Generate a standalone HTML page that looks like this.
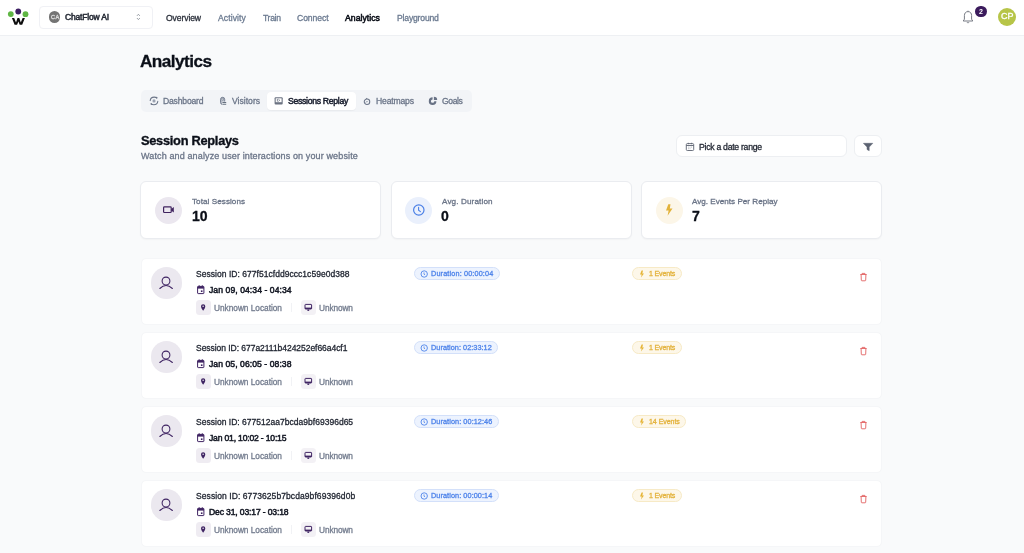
<!DOCTYPE html>
<html><head><meta charset="utf-8">
<style>
*{box-sizing:border-box;margin:0;padding:0}
html,body{width:1024px;height:553px;overflow:hidden}
body{background:#f9fafb;font-family:"Liberation Sans",sans-serif;color:#111827;position:relative}
.abs{position:absolute}
.t{position:absolute;white-space:nowrap;will-change:transform}
.hdr{position:absolute;left:0;top:0;width:1024px;height:36px;background:#fff;border-bottom:1px solid #eef0f3}
.sel{position:absolute;left:39px;top:6px;width:114px;height:22.5px;border:1px solid #f0f1f5;border-radius:4px;background:#fff}
.card{position:absolute;background:#fff;border:1px solid #eaecf0;border-radius:6px;box-shadow:0 1px 1.5px rgba(16,24,40,0.03)}
.t{-webkit-text-stroke:0.3px currentColor}
.scard{position:absolute;left:140.7px;width:741.3px;height:66.6px;background:#fff;border-radius:5px;border:1px solid #f5f6f8}
.chip{position:absolute;width:14.5px;height:14.5px;border-radius:3.5px;background:#efecf2}
.badge{position:absolute;height:12.6px;border-radius:7px}
</style></head><body>
<div class="hdr"></div>
<svg class="abs" style="left:0;top:0" width="36" height="36" viewBox="0 0 36 36">
<circle cx="10.8" cy="14.1" r="2.9" fill="#5fb644"/>
<circle cx="18.25" cy="11.5" r="2.9" fill="#3d1f63"/>
<circle cx="25.5" cy="14.2" r="2.9" fill="#5fb644"/>
<path d="M11.9 18 L14.2 18 L16.0 22.4 L17.5 18 L19.3 18 L20.8 22.4 L22.6 18 L24.9 18 L22.2 24.7 L19.7 24.7 L18.4 21.4 L17.1 24.7 L14.6 24.7 Z" fill="#0d0d0d"/>
</svg>
<div class="sel"></div>
<div class="abs" style="left:48.8px;top:11.1px;width:11.5px;height:11.5px;border-radius:50%;background:#747474"></div>
<div class="t" style="left:50.60px;top:14.86px;font-size:5.6px;line-height:5.6px;font-weight:400;color:#dcdcdc;letter-spacing:0.420px;-webkit-text-stroke:0.35px #dcdcdc;">CA</div>
<div class="t" style="left:64.60px;top:13.30px;font-size:8.5px;line-height:8.5px;font-weight:400;color:#262b36;letter-spacing:-0.163px;-webkit-text-stroke:0.5px #262b36;">ChatFlow AI</div>
<svg class="abs" style="left:135px;top:12px" width="7" height="11" viewBox="0 0 7 11"><path d="M2.0 3.8 L3.4 2.3 L4.8 3.8 M2.0 6.1 L3.4 7.6 L4.8 6.1" fill="none" stroke="#8e939c" stroke-width="0.95"/></svg>
<div class="t" style="left:166.20px;top:14.22px;font-size:8.6px;line-height:8.6px;font-weight:400;color:#2a2f3a;letter-spacing:-0.106px;">Overview</div>
<div class="t" style="left:217.80px;top:14.22px;font-size:8.6px;line-height:8.6px;font-weight:400;color:#6b7a90;letter-spacing:0.095px;">Activity</div>
<div class="t" style="left:262.60px;top:14.22px;font-size:8.6px;line-height:8.6px;font-weight:400;color:#6b7a90;letter-spacing:-0.319px;">Train</div>
<div class="t" style="left:296.90px;top:14.22px;font-size:8.6px;line-height:8.6px;font-weight:400;color:#6b7a90;letter-spacing:-0.072px;">Connect</div>
<div class="t" style="left:345.20px;top:14.14px;font-size:8.7px;line-height:8.7px;font-weight:400;color:#0b0f18;letter-spacing:0.011px;-webkit-text-stroke:0.55px #0b0f18;">Analytics</div>
<div class="t" style="left:396.80px;top:14.22px;font-size:8.6px;line-height:8.6px;font-weight:400;color:#6b7a90;letter-spacing:-0.179px;">Playground</div>
<svg class="abs" style="left:960px;top:9px" width="16" height="16" viewBox="0 0 16 16"><path d="M8 2.6 C5.6 2.6 4.4 4.4 4.4 6.6 L4.4 10.2 L3.2 12 L12.8 12 L11.6 10.2 L11.6 6.6 C11.6 4.4 10.4 2.6 8 2.6 Z M6.9 13.2 C7.3 14 8.7 14 9.1 13.2 M8 2.6 L8 1.7" fill="none" stroke="#777b84" stroke-width="1" stroke-linejoin="round"/></svg>
<div class="abs" style="left:975.3px;top:5.9px;width:11.3px;height:11.3px;border-radius:50%;background:#3b1b5c"></div>
<div class="t" style="left:978.60px;top:8.47px;font-size:7px;line-height:7px;font-weight:700;color:#fff;letter-spacing:0.000px;-webkit-text-stroke:0;">2</div>
<div class="abs" style="left:998px;top:8px;width:18px;height:18px;border-radius:50%;background:#b7c548"></div>
<div class="t" style="left:1000.70px;top:12.28px;font-size:9px;line-height:9px;font-weight:400;color:#fff;letter-spacing:-0.103px;">CP</div>
<div class="t" style="left:140.40px;top:52.84px;font-size:17.2px;line-height:17.2px;font-weight:700;color:#0b0f18;letter-spacing:-0.560px;-webkit-text-stroke:0.3px #0b0f18;">Analytics</div>
<div class="abs" style="left:140.5px;top:90px;width:331.5px;height:22px;background:#f2f4f7;border-radius:5px"></div>
<div class="abs" style="left:267.4px;top:92px;width:88.2px;height:18px;background:#fff;border-radius:4px;box-shadow:0 0.5px 1px rgba(0,0,0,0.04)"></div>
<div class="t" style="left:163.20px;top:97.42px;font-size:8.6px;line-height:8.6px;font-weight:400;color:#6b7588;letter-spacing:-0.184px;">Dashboard</div>
<div class="t" style="left:231.80px;top:97.42px;font-size:8.6px;line-height:8.6px;font-weight:400;color:#6b7588;letter-spacing:0.009px;">Visitors</div>
<div class="t" style="left:287.60px;top:97.34px;font-size:8.7px;line-height:8.7px;font-weight:400;color:#1b2030;letter-spacing:-0.314px;-webkit-text-stroke:0.5px #1b2030;">Sessions Replay</div>
<div class="t" style="left:376.00px;top:97.42px;font-size:8.6px;line-height:8.6px;font-weight:400;color:#6b7588;letter-spacing:-0.171px;">Heatmaps</div>
<div class="t" style="left:441.70px;top:97.42px;font-size:8.6px;line-height:8.6px;font-weight:400;color:#6b7588;letter-spacing:-0.417px;">Goals</div>
<svg class="abs" style="left:148px;top:95px" width="12" height="12" viewBox="0 0 12 12">
<path d="M2.2 5.6 C2.4 3.4 4.2 2.1 6.2 2.1 C7.2 2.1 8.1 2.4 8.8 2.9" fill="none" stroke="#6b7588" stroke-width="1.05" stroke-linecap="round"/>
<path d="M8.1 2.2 L9.1 2.6 L8.6 3.6" fill="none" stroke="#6b7588" stroke-width="1" stroke-linejoin="round"/>
<path d="M9.8 6.2 C9.6 8.4 7.8 9.7 5.8 9.7 C4.8 9.7 3.9 9.4 3.2 8.9" fill="none" stroke="#6b7588" stroke-width="1.05" stroke-linecap="round"/>
<path d="M3.9 9.6 L2.9 9.2 L3.4 8.2" fill="none" stroke="#6b7588" stroke-width="1" stroke-linejoin="round"/>
<circle cx="6" cy="5.9" r="1.55" fill="#9aa2b1"/>
</svg>
<svg class="abs" style="left:218px;top:95px" width="12" height="12" viewBox="0 0 12 12">
<rect x="2.5" y="2.3" width="4.2" height="7.2" rx="2.1" fill="#b4bac5" stroke="#6b7588" stroke-width="0.85"/>
<circle cx="4.7" cy="4.1" r="0.95" fill="#f2f4f7" stroke="#6b7588" stroke-width="0.6"/>
<rect x="4.1" y="6.6" width="4.3" height="3.6" fill="#f2f4f7"/>
<path d="M4.4 7.4 L8.2 7.4 M4.4 9.3 L8.2 9.3" stroke="#66707f" stroke-width="1.05"/>
</svg>
<svg class="abs" style="left:272px;top:95px" width="12" height="12" viewBox="0 0 12 12">
<rect x="2.6" y="2.2" width="8.1" height="7.4" rx="1" fill="#6c7382"/>
<rect x="3.7" y="3.3" width="5.9" height="3.9" fill="#fff"/>
<rect x="4.9" y="3.9" width="0.8" height="2.7" fill="#6c7382"/>
<path d="M6.4 4.1 L7.7 5.25 L6.4 6.4" fill="none" stroke="#6c7382" stroke-width="0.85"/>
</svg>
<svg class="abs" style="left:361px;top:95px" width="12" height="12" viewBox="0 0 12 12">
<circle cx="6" cy="6.8" r="2.75" fill="none" stroke="#6b7588" stroke-width="1.05"/>
<path d="M4.9 4.1 L5.5 2.7 L6.6 4.0 Z" fill="#6b7588"/>
<path d="M4.7 7.9 L5.6 6.3 L6.1 7.0 L7.1 6.1" fill="none" stroke="#8f98a8" stroke-width="0.7"/>
</svg>
<svg class="abs" style="left:427px;top:95px" width="12" height="12" viewBox="0 0 12 12">
<path d="M5.6 3.4 A2.75 2.75 0 1 0 8.35 6.2" fill="none" stroke="#687285" stroke-width="2.1"/>
<path d="M6.9 5.1 L6.9 1.8 A3.3 3.3 0 0 1 10.2 5.1 Z" fill="#687285"/>
</svg>
<div class="t" style="left:140.60px;top:134.66px;font-size:12.8px;line-height:12.8px;font-weight:700;color:#0b0f18;letter-spacing:-0.267px;-webkit-text-stroke:0.35px #0b0f18;">Session Replays</div>
<div class="t" style="left:140.50px;top:151.78px;font-size:9px;line-height:9px;font-weight:400;color:#6b7588;letter-spacing:0.130px;">Watch and analyze user interactions on your website</div>
<div class="card" style="left:676.3px;top:135.4px;width:170.3px;height:22px;border-color:#edeff2;box-shadow:none"></div>
<div class="card" style="left:854.4px;top:135.4px;width:27.7px;height:22px;border-color:#edeff2;box-shadow:none"></div>
<svg class="abs" style="left:684px;top:141px" width="12" height="11" viewBox="0 0 12 11">
<rect x="2.3" y="2.6" width="7.4" height="6.9" rx="1" fill="none" stroke="#5c6372" stroke-width="0.9"/>
<path d="M2.3 4.5 L9.7 4.5 M4.3 1.8 L4.3 3.2 M7.7 1.8 L7.7 3.2" stroke="#5c6372" stroke-width="0.9"/>
<path d="M4 6.1 H4.8 M5.6 6.1 H6.4 M7.2 6.1 H8 M4 7.7 H4.8 M5.6 7.7 H6.4" stroke="#9096a2" stroke-width="0.7"/>
</svg>
<svg class="abs" style="left:862px;top:142px" width="12" height="10" viewBox="0 0 12 10">
<path d="M1.4 1.3 L10.8 1.3 L7.2 5.1 L7.2 8.7 L5 7.5 L5 5.1 Z" fill="#5c6372" stroke="#5c6372" stroke-width="0.5" stroke-linejoin="round"/>
</svg>
<div class="t" style="left:699.40px;top:143.04px;font-size:8.7px;line-height:8.7px;font-weight:400;color:#1f2430;letter-spacing:-0.282px;">Pick a date range</div>
<div class="card" style="left:140.2px;top:181.2px;width:241px;height:57.5px"></div>
<div class="abs" style="left:154.5px;top:196.5px;width:27.2px;height:27.2px;border-radius:50%;background:#ebe7ef"></div>
<div class="t" style="left:191.60px;top:197.54px;font-size:8.1px;line-height:8.1px;font-weight:400;color:#697386;letter-spacing:0.067px;">Total Sessions</div>
<div class="t" style="left:191.60px;top:209.05px;font-size:14px;line-height:14px;font-weight:700;color:#0b0f18;letter-spacing:0.000px;-webkit-text-stroke:0.3px #0b0f18;">10</div>
<div class="card" style="left:391px;top:181.2px;width:241px;height:57.5px"></div>
<div class="abs" style="left:405.3px;top:196.5px;width:27.2px;height:27.2px;border-radius:50%;background:#eaf0fc"></div>
<div class="t" style="left:441.60px;top:197.54px;font-size:8.1px;line-height:8.1px;font-weight:400;color:#697386;letter-spacing:0.139px;">Avg. Duration</div>
<div class="t" style="left:441.40px;top:209.05px;font-size:14px;line-height:14px;font-weight:700;color:#0b0f18;letter-spacing:0.000px;-webkit-text-stroke:0.3px #0b0f18;">0</div>
<div class="card" style="left:641.2px;top:181.2px;width:241px;height:57.5px"></div>
<div class="abs" style="left:655.5px;top:196.5px;width:27.2px;height:27.2px;border-radius:50%;background:#fcf6e8"></div>
<div class="t" style="left:691.80px;top:197.54px;font-size:8.1px;line-height:8.1px;font-weight:400;color:#697386;letter-spacing:0.010px;">Avg. Events Per Replay</div>
<div class="t" style="left:691.60px;top:209.05px;font-size:14px;line-height:14px;font-weight:700;color:#0b0f18;letter-spacing:0.000px;-webkit-text-stroke:0.3px #0b0f18;">7</div>
<svg class="abs" style="left:161px;top:203px" width="16" height="14" viewBox="0 0 16 14">
<rect x="2.6" y="3.9" width="7.6" height="5.6" rx="0.8" fill="none" stroke="#40235f" stroke-width="1.2"/>
<path d="M10.2 6 L12.8 4 L12.8 9.6 L10.2 7.6 Z" fill="#40235f"/>
</svg>
<svg class="abs" style="left:411px;top:202px" width="16" height="16" viewBox="0 0 16 16">
<circle cx="7.8" cy="8" r="5.2" fill="none" stroke="#4a7fe6" stroke-width="1.2"/>
<path d="M7.6 5.2 L7.6 8.2 L9.4 9.6" fill="none" stroke="#4a7fe6" stroke-width="1.1" stroke-linecap="round"/>
</svg>
<svg class="abs" style="left:663px;top:202px" width="12" height="16" viewBox="0 0 12 16">
<path d="M5.3 2.2 L3 8.6 L5.6 8.6 L4.6 13.8 L9.5 6.4 L6.8 6.4 L7.5 2.2 Z" fill="#e2b23a"/>
</svg>
<div class="scard" style="top:258px"></div>
<div class="abs" style="left:150.5px;top:267px;width:31.5px;height:31.5px;border-radius:50%;background:#ebe8ef"></div>
<svg class="abs" style="left:156px;top:273px" width="20" height="20" viewBox="0 0 20 20">
<circle cx="10" cy="8" r="3.9" fill="none" stroke="#3f2463" stroke-width="1.05"/>
<path d="M3.8 15.5 Q10 9.6 16.4 15.5" fill="none" stroke="#3f2463" stroke-width="1.05" stroke-linecap="round"/>
</svg>
<div class="t" style="left:195.90px;top:269.80px;font-size:8.5px;line-height:8.5px;font-weight:400;color:#1f2430;letter-spacing:0.038px;-webkit-text-stroke:0.3px #1f2430;">Session ID: 677f51cfdd9ccc1c59e0d388</div>
<svg class="abs" style="left:195px;top:284px" width="11" height="11" viewBox="0 0 11 11">
<rect x="2.6" y="2.4" width="6.3" height="7.2" rx="0.6" fill="none" stroke="#3f2463" stroke-width="1"/>
<rect x="2.6" y="2.4" width="6.3" height="2.2" fill="#3f2463"/>
<path d="M4.2 1.2 L4.2 2.6 M7.3 1.2 L7.3 2.6" stroke="#3f2463" stroke-width="0.9"/>
<rect x="5.9" y="6.4" width="1.6" height="1.6" fill="#3f2463"/>
</svg>
<div class="t" style="left:208.60px;top:286.32px;font-size:8.6px;line-height:8.6px;font-weight:400;color:#141824;letter-spacing:0.071px;-webkit-text-stroke:0.5px #141824;">Jan 09, 04:34 - 04:34</div>
<div class="chip" style="left:196px;top:300px"></div>
<svg class="abs" style="left:196px;top:300px" width="14.5" height="14.5" viewBox="0 0 14.5 14.5">
<path d="M7.15 10.7 C6.3 9.5 5.0 8.1 5.0 6.3 A2.15 2.15 0 0 1 9.3 6.3 C9.3 8.1 8.0 9.5 7.15 10.7 Z" fill="#3f2463"/>
<circle cx="7.15" cy="6.3" r="0.75" fill="#efecf2"/>
</svg>
<div class="t" style="left:213.80px;top:304.17px;font-size:8.3px;line-height:8.3px;font-weight:400;color:#737c8e;letter-spacing:-0.019px;">Unknown Location</div>
<div class="abs" style="left:291px;top:302.7px;width:0.8px;height:9px;background:#f1f2f5"></div>
<div class="chip" style="left:301px;top:300px;background:#f3f1f5"></div>
<svg class="abs" style="left:301px;top:300px" width="14.5" height="14.5" viewBox="0 0 14.5 14.5">
<rect x="4" y="4.4" width="6.6" height="4.6" rx="0.6" fill="none" stroke="#3f2463" stroke-width="1"/>
<rect x="4" y="7.6" width="6.6" height="1.4" fill="#3f2463"/>
<path d="M6.4 10.2 L8.2 10.2" stroke="#3f2463" stroke-width="1.4"/>
</svg>
<div class="t" style="left:319.30px;top:304.17px;font-size:8.3px;line-height:8.3px;font-weight:400;color:#737c8e;letter-spacing:-0.101px;">Unknown</div>
<div class="badge" style="left:413.9px;top:267.1px;width:85.9px;background:#edf3fe;border:1px solid #d3e0fa"></div>
<svg class="abs" style="left:419px;top:268.5px" width="10" height="10" viewBox="0 0 10 10">
<circle cx="5.2" cy="5" r="3.2" fill="none" stroke="#4f84ea" stroke-width="0.9"/>
<path d="M5 3.4 L5 5.2 L6.1 5.9" fill="none" stroke="#4f84ea" stroke-width="0.8"/>
</svg>
<div class="t" style="left:430.70px;top:270.32px;font-size:7.3px;line-height:7.3px;font-weight:400;color:#4f84ea;letter-spacing:0.131px;-webkit-text-stroke:0.3px #4f84ea;">Duration: 00:00:04</div>
<div class="badge" style="left:631.7px;top:267px;width:50px;background:#fdf7e9;border:1px solid #f7eac6"></div>
<svg class="abs" style="left:638px;top:268.5px" width="8" height="10" viewBox="0 0 8 10">
<path d="M3.6 1.6 L2 5.4 L3.7 5.4 L3 8.6 L6 4.4 L4.3 4.4 L5 1.6 Z" fill="#e5b437"/>
</svg>
<div class="t" style="left:649.10px;top:270.13px;font-size:7.05px;line-height:7.05px;font-weight:400;color:#e3b23c;letter-spacing:-0.176px;-webkit-text-stroke:0.3px #e3b23c;">1 Events</div>
<svg class="abs" style="left:857px;top:270.7px" width="13" height="12" viewBox="0 0 13 12">
<path d="M3.3 3.5 L9.7 3.5 M5.1 3.4 L5.1 2.4 L7.9 2.4 L7.9 3.4" fill="none" stroke="#e26262" stroke-width="0.9"/>
<path d="M4.1 3.7 L4.3 9.2 Q4.35 9.8 4.95 9.8 L8.05 9.8 Q8.65 9.8 8.7 9.2 L8.9 3.7" fill="none" stroke="#e26262" stroke-width="0.9"/>
</svg>
<div class="scard" style="top:332px"></div>
<div class="abs" style="left:150.5px;top:341px;width:31.5px;height:31.5px;border-radius:50%;background:#ebe8ef"></div>
<svg class="abs" style="left:156px;top:347px" width="20" height="20" viewBox="0 0 20 20">
<circle cx="10" cy="8" r="3.9" fill="none" stroke="#3f2463" stroke-width="1.05"/>
<path d="M3.8 15.5 Q10 9.6 16.4 15.5" fill="none" stroke="#3f2463" stroke-width="1.05" stroke-linecap="round"/>
</svg>
<div class="t" style="left:195.90px;top:343.80px;font-size:8.5px;line-height:8.5px;font-weight:400;color:#1f2430;letter-spacing:-0.040px;-webkit-text-stroke:0.3px #1f2430;">Session ID: 677a2111b424252ef66a4cf1</div>
<svg class="abs" style="left:195px;top:358px" width="11" height="11" viewBox="0 0 11 11">
<rect x="2.6" y="2.4" width="6.3" height="7.2" rx="0.6" fill="none" stroke="#3f2463" stroke-width="1"/>
<rect x="2.6" y="2.4" width="6.3" height="2.2" fill="#3f2463"/>
<path d="M4.2 1.2 L4.2 2.6 M7.3 1.2 L7.3 2.6" stroke="#3f2463" stroke-width="0.9"/>
<rect x="5.9" y="6.4" width="1.6" height="1.6" fill="#3f2463"/>
</svg>
<div class="t" style="left:208.60px;top:360.32px;font-size:8.6px;line-height:8.6px;font-weight:400;color:#141824;letter-spacing:0.061px;-webkit-text-stroke:0.5px #141824;">Jan 05, 06:05 - 08:38</div>
<div class="chip" style="left:196px;top:374px"></div>
<svg class="abs" style="left:196px;top:374px" width="14.5" height="14.5" viewBox="0 0 14.5 14.5">
<path d="M7.15 10.7 C6.3 9.5 5.0 8.1 5.0 6.3 A2.15 2.15 0 0 1 9.3 6.3 C9.3 8.1 8.0 9.5 7.15 10.7 Z" fill="#3f2463"/>
<circle cx="7.15" cy="6.3" r="0.75" fill="#efecf2"/>
</svg>
<div class="t" style="left:213.80px;top:378.17px;font-size:8.3px;line-height:8.3px;font-weight:400;color:#737c8e;letter-spacing:-0.019px;">Unknown Location</div>
<div class="abs" style="left:291px;top:376.7px;width:0.8px;height:9px;background:#f1f2f5"></div>
<div class="chip" style="left:301px;top:374px;background:#f3f1f5"></div>
<svg class="abs" style="left:301px;top:374px" width="14.5" height="14.5" viewBox="0 0 14.5 14.5">
<rect x="4" y="4.4" width="6.6" height="4.6" rx="0.6" fill="none" stroke="#3f2463" stroke-width="1"/>
<rect x="4" y="7.6" width="6.6" height="1.4" fill="#3f2463"/>
<path d="M6.4 10.2 L8.2 10.2" stroke="#3f2463" stroke-width="1.4"/>
</svg>
<div class="t" style="left:319.30px;top:378.17px;font-size:8.3px;line-height:8.3px;font-weight:400;color:#737c8e;letter-spacing:-0.101px;">Unknown</div>
<div class="badge" style="left:413.9px;top:341.1px;width:84.5px;background:#edf3fe;border:1px solid #d3e0fa"></div>
<svg class="abs" style="left:419px;top:342.5px" width="10" height="10" viewBox="0 0 10 10">
<circle cx="5.2" cy="5" r="3.2" fill="none" stroke="#4f84ea" stroke-width="0.9"/>
<path d="M5 3.4 L5 5.2 L6.1 5.9" fill="none" stroke="#4f84ea" stroke-width="0.8"/>
</svg>
<div class="t" style="left:430.70px;top:344.32px;font-size:7.3px;line-height:7.3px;font-weight:400;color:#4f84ea;letter-spacing:0.043px;-webkit-text-stroke:0.3px #4f84ea;">Duration: 02:33:12</div>
<div class="badge" style="left:631.7px;top:341px;width:50px;background:#fdf7e9;border:1px solid #f7eac6"></div>
<svg class="abs" style="left:638px;top:342.5px" width="8" height="10" viewBox="0 0 8 10">
<path d="M3.6 1.6 L2 5.4 L3.7 5.4 L3 8.6 L6 4.4 L4.3 4.4 L5 1.6 Z" fill="#e5b437"/>
</svg>
<div class="t" style="left:649.10px;top:344.13px;font-size:7.05px;line-height:7.05px;font-weight:400;color:#e3b23c;letter-spacing:-0.176px;-webkit-text-stroke:0.3px #e3b23c;">1 Events</div>
<svg class="abs" style="left:857px;top:344.7px" width="13" height="12" viewBox="0 0 13 12">
<path d="M3.3 3.5 L9.7 3.5 M5.1 3.4 L5.1 2.4 L7.9 2.4 L7.9 3.4" fill="none" stroke="#e26262" stroke-width="0.9"/>
<path d="M4.1 3.7 L4.3 9.2 Q4.35 9.8 4.95 9.8 L8.05 9.8 Q8.65 9.8 8.7 9.2 L8.9 3.7" fill="none" stroke="#e26262" stroke-width="0.9"/>
</svg>
<div class="scard" style="top:406px"></div>
<div class="abs" style="left:150.5px;top:415px;width:31.5px;height:31.5px;border-radius:50%;background:#ebe8ef"></div>
<svg class="abs" style="left:156px;top:421px" width="20" height="20" viewBox="0 0 20 20">
<circle cx="10" cy="8" r="3.9" fill="none" stroke="#3f2463" stroke-width="1.05"/>
<path d="M3.8 15.5 Q10 9.6 16.4 15.5" fill="none" stroke="#3f2463" stroke-width="1.05" stroke-linecap="round"/>
</svg>
<div class="t" style="left:195.90px;top:417.80px;font-size:8.5px;line-height:8.5px;font-weight:400;color:#1f2430;letter-spacing:0.019px;-webkit-text-stroke:0.3px #1f2430;">Session ID: 677512aa7bcda9bf69396d65</div>
<svg class="abs" style="left:195px;top:432px" width="11" height="11" viewBox="0 0 11 11">
<rect x="2.6" y="2.4" width="6.3" height="7.2" rx="0.6" fill="none" stroke="#3f2463" stroke-width="1"/>
<rect x="2.6" y="2.4" width="6.3" height="2.2" fill="#3f2463"/>
<path d="M4.2 1.2 L4.2 2.6 M7.3 1.2 L7.3 2.6" stroke="#3f2463" stroke-width="0.9"/>
<rect x="5.9" y="6.4" width="1.6" height="1.6" fill="#3f2463"/>
</svg>
<div class="t" style="left:208.60px;top:434.32px;font-size:8.6px;line-height:8.6px;font-weight:400;color:#141824;letter-spacing:-0.189px;-webkit-text-stroke:0.5px #141824;">Jan 01, 10:02 - 10:15</div>
<div class="chip" style="left:196px;top:448px"></div>
<svg class="abs" style="left:196px;top:448px" width="14.5" height="14.5" viewBox="0 0 14.5 14.5">
<path d="M7.15 10.7 C6.3 9.5 5.0 8.1 5.0 6.3 A2.15 2.15 0 0 1 9.3 6.3 C9.3 8.1 8.0 9.5 7.15 10.7 Z" fill="#3f2463"/>
<circle cx="7.15" cy="6.3" r="0.75" fill="#efecf2"/>
</svg>
<div class="t" style="left:213.80px;top:452.17px;font-size:8.3px;line-height:8.3px;font-weight:400;color:#737c8e;letter-spacing:-0.019px;">Unknown Location</div>
<div class="abs" style="left:291px;top:450.7px;width:0.8px;height:9px;background:#f1f2f5"></div>
<div class="chip" style="left:301px;top:448px;background:#f3f1f5"></div>
<svg class="abs" style="left:301px;top:448px" width="14.5" height="14.5" viewBox="0 0 14.5 14.5">
<rect x="4" y="4.4" width="6.6" height="4.6" rx="0.6" fill="none" stroke="#3f2463" stroke-width="1"/>
<rect x="4" y="7.6" width="6.6" height="1.4" fill="#3f2463"/>
<path d="M6.4 10.2 L8.2 10.2" stroke="#3f2463" stroke-width="1.4"/>
</svg>
<div class="t" style="left:319.30px;top:452.17px;font-size:8.3px;line-height:8.3px;font-weight:400;color:#737c8e;letter-spacing:-0.101px;">Unknown</div>
<div class="badge" style="left:413.9px;top:415.1px;width:85px;background:#edf3fe;border:1px solid #d3e0fa"></div>
<svg class="abs" style="left:419px;top:416.5px" width="10" height="10" viewBox="0 0 10 10">
<circle cx="5.2" cy="5" r="3.2" fill="none" stroke="#4f84ea" stroke-width="0.9"/>
<path d="M5 3.4 L5 5.2 L6.1 5.9" fill="none" stroke="#4f84ea" stroke-width="0.8"/>
</svg>
<div class="t" style="left:430.70px;top:418.32px;font-size:7.3px;line-height:7.3px;font-weight:400;color:#4f84ea;letter-spacing:0.073px;-webkit-text-stroke:0.3px #4f84ea;">Duration: 00:12:46</div>
<div class="badge" style="left:631.7px;top:415px;width:54.7px;background:#fdf7e9;border:1px solid #f7eac6"></div>
<svg class="abs" style="left:638px;top:416.5px" width="8" height="10" viewBox="0 0 8 10">
<path d="M3.6 1.6 L2 5.4 L3.7 5.4 L3 8.6 L6 4.4 L4.3 4.4 L5 1.6 Z" fill="#e5b437"/>
</svg>
<div class="t" style="left:649.10px;top:418.13px;font-size:7.05px;line-height:7.05px;font-weight:400;color:#e3b23c;letter-spacing:-0.057px;-webkit-text-stroke:0.3px #e3b23c;">14 Events</div>
<svg class="abs" style="left:857px;top:418.7px" width="13" height="12" viewBox="0 0 13 12">
<path d="M3.3 3.5 L9.7 3.5 M5.1 3.4 L5.1 2.4 L7.9 2.4 L7.9 3.4" fill="none" stroke="#e26262" stroke-width="0.9"/>
<path d="M4.1 3.7 L4.3 9.2 Q4.35 9.8 4.95 9.8 L8.05 9.8 Q8.65 9.8 8.7 9.2 L8.9 3.7" fill="none" stroke="#e26262" stroke-width="0.9"/>
</svg>
<div class="scard" style="top:480px"></div>
<div class="abs" style="left:150.5px;top:489px;width:31.5px;height:31.5px;border-radius:50%;background:#ebe8ef"></div>
<svg class="abs" style="left:156px;top:495px" width="20" height="20" viewBox="0 0 20 20">
<circle cx="10" cy="8" r="3.9" fill="none" stroke="#3f2463" stroke-width="1.05"/>
<path d="M3.8 15.5 Q10 9.6 16.4 15.5" fill="none" stroke="#3f2463" stroke-width="1.05" stroke-linecap="round"/>
</svg>
<div class="t" style="left:195.90px;top:491.80px;font-size:8.5px;line-height:8.5px;font-weight:400;color:#1f2430;letter-spacing:0.079px;-webkit-text-stroke:0.3px #1f2430;">Session ID: 6773625b7bcda9bf69396d0b</div>
<svg class="abs" style="left:195px;top:506px" width="11" height="11" viewBox="0 0 11 11">
<rect x="2.6" y="2.4" width="6.3" height="7.2" rx="0.6" fill="none" stroke="#3f2463" stroke-width="1"/>
<rect x="2.6" y="2.4" width="6.3" height="2.2" fill="#3f2463"/>
<path d="M4.2 1.2 L4.2 2.6 M7.3 1.2 L7.3 2.6" stroke="#3f2463" stroke-width="0.9"/>
<rect x="5.9" y="6.4" width="1.6" height="1.6" fill="#3f2463"/>
</svg>
<div class="t" style="left:208.60px;top:508.32px;font-size:8.6px;line-height:8.6px;font-weight:400;color:#141824;letter-spacing:-0.151px;-webkit-text-stroke:0.5px #141824;">Dec 31, 03:17 - 03:18</div>
<div class="chip" style="left:196px;top:522px"></div>
<svg class="abs" style="left:196px;top:522px" width="14.5" height="14.5" viewBox="0 0 14.5 14.5">
<path d="M7.15 10.7 C6.3 9.5 5.0 8.1 5.0 6.3 A2.15 2.15 0 0 1 9.3 6.3 C9.3 8.1 8.0 9.5 7.15 10.7 Z" fill="#3f2463"/>
<circle cx="7.15" cy="6.3" r="0.75" fill="#efecf2"/>
</svg>
<div class="t" style="left:213.80px;top:526.17px;font-size:8.3px;line-height:8.3px;font-weight:400;color:#737c8e;letter-spacing:-0.019px;">Unknown Location</div>
<div class="abs" style="left:291px;top:524.7px;width:0.8px;height:9px;background:#f1f2f5"></div>
<div class="chip" style="left:301px;top:522px;background:#f3f1f5"></div>
<svg class="abs" style="left:301px;top:522px" width="14.5" height="14.5" viewBox="0 0 14.5 14.5">
<rect x="4" y="4.4" width="6.6" height="4.6" rx="0.6" fill="none" stroke="#3f2463" stroke-width="1"/>
<rect x="4" y="7.6" width="6.6" height="1.4" fill="#3f2463"/>
<path d="M6.4 10.2 L8.2 10.2" stroke="#3f2463" stroke-width="1.4"/>
</svg>
<div class="t" style="left:319.30px;top:526.17px;font-size:8.3px;line-height:8.3px;font-weight:400;color:#737c8e;letter-spacing:-0.101px;">Unknown</div>
<div class="badge" style="left:413.9px;top:489.1px;width:85px;background:#edf3fe;border:1px solid #d3e0fa"></div>
<svg class="abs" style="left:419px;top:490.5px" width="10" height="10" viewBox="0 0 10 10">
<circle cx="5.2" cy="5" r="3.2" fill="none" stroke="#4f84ea" stroke-width="0.9"/>
<path d="M5 3.4 L5 5.2 L6.1 5.9" fill="none" stroke="#4f84ea" stroke-width="0.8"/>
</svg>
<div class="t" style="left:430.70px;top:492.32px;font-size:7.3px;line-height:7.3px;font-weight:400;color:#4f84ea;letter-spacing:0.073px;-webkit-text-stroke:0.3px #4f84ea;">Duration: 00:00:14</div>
<div class="badge" style="left:631.7px;top:489px;width:50px;background:#fdf7e9;border:1px solid #f7eac6"></div>
<svg class="abs" style="left:638px;top:490.5px" width="8" height="10" viewBox="0 0 8 10">
<path d="M3.6 1.6 L2 5.4 L3.7 5.4 L3 8.6 L6 4.4 L4.3 4.4 L5 1.6 Z" fill="#e5b437"/>
</svg>
<div class="t" style="left:649.10px;top:492.13px;font-size:7.05px;line-height:7.05px;font-weight:400;color:#e3b23c;letter-spacing:-0.176px;-webkit-text-stroke:0.3px #e3b23c;">1 Events</div>
<svg class="abs" style="left:857px;top:492.7px" width="13" height="12" viewBox="0 0 13 12">
<path d="M3.3 3.5 L9.7 3.5 M5.1 3.4 L5.1 2.4 L7.9 2.4 L7.9 3.4" fill="none" stroke="#e26262" stroke-width="0.9"/>
<path d="M4.1 3.7 L4.3 9.2 Q4.35 9.8 4.95 9.8 L8.05 9.8 Q8.65 9.8 8.7 9.2 L8.9 3.7" fill="none" stroke="#e26262" stroke-width="0.9"/>
</svg>
</body></html>
